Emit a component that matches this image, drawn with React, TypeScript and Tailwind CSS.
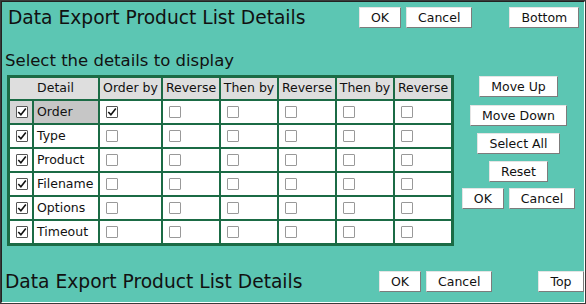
import React from 'react';

const font = { fontFamily: '"DejaVu Sans", Verdana, sans-serif' };

const rows = ['Order', 'Type', 'Product', 'Filename', 'Options', 'Timeout'];
const heads = ['Order by', 'Reverse', 'Then by', 'Reverse', 'Then by', 'Reverse'];

function Btn({ label, className = '' }: { label: string; className?: string }) {
  return (
    <button
      type="button"
      className={`h-[21px] shrink-0 border border-t-[#e4e4e4] border-l-[#e4e4e4] border-b-[#7c7c7c] border-r-[#7c7c7c] bg-white px-[11px] text-[12.5px] leading-[19px] text-[#111] ${className}`}
    >
      {label}
    </button>
  );
}

function Box({ checked = false }: { checked?: boolean }) {
  return (
    <span
      className={`flex h-[12px] w-[12px] items-center justify-center rounded-[1px] border bg-white ${
        checked ? 'border-[#555]' : 'border-[#999]'
      }`}
    >
      {checked && (
        <svg width="10" height="10" viewBox="0 0 10 10">
          <path d="M1.3 5 L3.9 7.8 L8.8 1.5" fill="none" stroke="#111" strokeWidth="1.6" />
        </svg>
      )}
    </span>
  );
}

export default function App() {
  return (
    <div className="h-[304px] w-[586px] border border-[#3a3a3a] bg-[#5cc6b3]" style={font}>
      <div className="flex h-full flex-col border-t border-l border-r border-b border-t-[#222] border-l-[#222] border-r-white border-b-white text-[#111]">
        <div className="mt-[5px] flex h-[21px] items-center pl-[6px]">
          <div className="w-[351px] text-[18.67px] leading-[21px]">Data Export Product List Details</div>
          <Btn label="OK" />
          <Btn label="Cancel" className="ml-[5px]" />
          <Btn label="Bottom" className="ml-[37px]" />
        </div>

        <div className="mt-[23px] h-[20px] pl-[3px] text-[16.5px] leading-[20px]">Select the details to display</div>

        <div className="mt-[4px] flex">
          <div
            className="ml-[5px] grid gap-[2px] border-[3px] border-[#1b6b45] bg-[#1b6b45] text-[12.5px]"
            style={{
              gridTemplateColumns: '22px 64px 61px 56px 56px 56px 56px 56px',
              gridTemplateRows: '21px repeat(6, 22px)',
            }}
          >
            <div className="col-span-2 flex items-center justify-center bg-[#dedede] pl-[3px]">Detail</div>
            {heads.map((h, i) => (
              <div key={i} className="flex items-center justify-center bg-[#dedede]">
                {h}
              </div>
            ))}
            {rows.map((r, ri) => (
              <React.Fragment key={r}>
                <div className={`flex items-center pl-[6px] ${ri === 0 ? 'bg-[#d6d6d6]' : 'bg-white'}`}>
                  <Box checked />
                </div>
                <div className={`flex items-center pl-[3px] ${ri === 0 ? 'bg-[#c6c6c6]' : 'bg-white'}`}>{r}</div>
                {heads.map((_, ci) => (
                  <div key={ci} className="flex items-center bg-white pl-[6px]">
                    <Box checked={ri === 0 && ci === 0} />
                  </div>
                ))}
              </React.Fragment>
            ))}
          </div>

          <div className="ml-[3px] flex w-[123px] flex-col items-center pt-[1px]">
            <Btn label="Move Up" />
            <Btn label="Move Down" className="mt-[8px]" />
            <Btn label="Select All" className="mt-[7px]" />
            <Btn label="Reset" className="mt-[7px]" />
            <div className="mt-[6px] flex">
              <Btn label="OK" />
              <Btn label="Cancel" className="ml-[5px]" />
            </div>
          </div>
        </div>

        <div className="mt-[25px] flex h-[21px] items-center pl-[3px]">
          <div className="w-[374px] text-[18.67px] leading-[21px]">Data Export Product List Details</div>
          <Btn label="OK" />
          <Btn label="Cancel" className="ml-[5px]" />
          <Btn label="Top" className="ml-[46px]" />
        </div>
      </div>
    </div>
  );
}
